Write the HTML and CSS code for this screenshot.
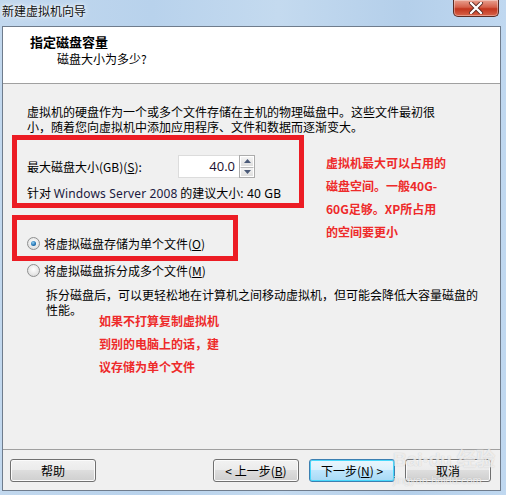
FILE: index.html
```html
<!DOCTYPE html>
<html lang="zh-CN">
<head>
<meta charset="utf-8">
<title>新建虚拟机向导</title>
<link rel="stylesheet" href="styles.css">
</head>
<body>
<div class="window">
  <div class="titlebar">
    <span class="title">新建虚拟机向导</span>
    <div class="close"><svg width="16" height="12" viewBox="0 0 16 12"><path d="M3 1 L13 11 M13 1 L3 11" stroke="#5a2a22" stroke-width="4" stroke-linecap="round"/><path d="M3 1 L13 11 M13 1 L3 11" stroke="#ffffff" stroke-width="2.4" stroke-linecap="round"/></svg></div>
  </div>
  <div class="panel">
    <div class="header">
      <div class="h-title">指定磁盘容量</div>
      <div class="h-sub">磁盘大小为多少?</div>
    </div>
    <div class="content">
      <p class="intro">虚拟机的硬盘作为一个或多个文件存储在主机的物理磁盘中。这些文件最初很<br>小，随着您向虚拟机中添加应用程序、文件和数据而逐渐变大。</p>
      <div class="size-row">
        <span class="label">最大磁盘大小(GB)(<u>S</u>):</span>
        <div class="spin">
          <div class="spin-input">40.0</div>
          <div class="spin-btns">
            <div class="sbtn"><svg width="7" height="4" viewBox="0 0 7 4"><path d="M0 4 L3.5 0 L7 4 Z" fill="#4a5a78"/></svg></div>
            <div class="sbtn"><svg width="7" height="4" viewBox="0 0 7 4"><path d="M0 0 L3.5 4 L7 0 Z" fill="#4a5a78"/></svg></div>
          </div>
        </div>
      </div>
      <div class="recommend">针对 <span class="latin">Windows Server 2008</span> 的建议大小<span class="latin">: 40 GB</span></div>
      <div class="radio-row r1"><span class="radio on"></span><span>将虚拟磁盘存储为单个文件(<u>O</u>)</span></div>
      <div class="radio-row r2"><span class="radio"></span><span>将虚拟磁盘拆分成多个文件(<u>M</u>)</span></div>
      <p class="desc">拆分磁盘后，可以更轻松地在计算机之间移动虚拟机，但可能会降低大容量磁盘的<br>性能。</p>

      <div class="mark box1"></div>
      <div class="mark box2"></div>
      <div class="note note-right"><div>虚拟机最大可以占用的</div><div>磁盘空间。一般40G-</div><div>60G足够。XP所占用</div><div>的空间要更小</div></div>
      <div class="note note-bottom"><div>如果不打算复制虚拟机</div><div>到别的电脑上的话，建</div><div>议存储为单个文件</div></div>
    </div>
    <div class="footer">
      <button class="btn">帮助</button>
      <div class="spacer"></div>
      <button class="btn">&lt; 上一步(<u>B</u>)</button>
      <button class="btn primary">下一步(<u>N</u>) &gt;</button>
      <button class="btn">取消</button>
      <div class="watermark">Bai<span class="paw">●</span>du 经验<br><span class="wm-url">jingyan.baidu.com</span></div>
    </div>
  </div>
</div>
</body>
</html>
```
FILE: styles.css
```css
* { box-sizing: border-box; }
html, body { margin: 0; padding: 0; }
body {
  width: 506px;
  height: 495px;
  overflow: hidden;
  font-family: "Noto Sans CJK SC", "Noto Sans", sans-serif;
  font-size: 12px;
  color: #000;
  background: #bcd7ef;
}
.window {
  width: 506px;
  height: 495px;
  display: flex;
  flex-direction: column;
  background: linear-gradient(90deg, #c2d8ee 0%, #b8d2ec 30%, #c4daef 55%, #b4cfea 80%, #c0d8f0 100%);
}
.titlebar {
  height: 26px;
  flex: none;
  display: flex;
  align-items: flex-start;
  justify-content: space-between;
  padding-left: 2px;
  padding-right: 7px;
}
.title {
  line-height: 22px;
  font-size: 12px;
  color: #111;
  text-shadow: 0 0 6px #fff, 0 0 3px #fff;
}
.close {
  width: 46px;
  height: 17px;
  border: 1px solid #5b2c24;
  border-top: none;
  border-radius: 0 0 5px 5px;
  background: linear-gradient(180deg, #e8a190 0%, #d5604a 45%, #c2351d 55%, #d8644a 100%);
  display: flex;
  align-items: center;
  justify-content: center;
  box-shadow: inset 0 0 0 1px rgba(255,255,255,0.35);
}
.panel {
  flex: none;
  margin-left: 2px;
  width: 499px;
  height: 465px;
  border: 1px solid #6f7c8c;
  background: #f0f0f0;
  display: flex;
  flex-direction: column;
}
.header {
  height: 57px;
  flex: none;
  background: #fff;
  border-bottom: 1px solid #a0a0a0;
  padding-left: 27px;
  padding-top: 6px;
}
.h-title {
  font-weight: bold;
  font-size: 13px;
  line-height: 17px;
}
.h-sub {
  padding-left: 27px;
  line-height: 17px;
}
.content {
  flex: 1;
  position: relative;
  padding-left: 24px;
  padding-top: 20px;
}
.intro {
  margin: 0;
  line-height: 15px;
}
.size-row {
  margin-top: 21px;
  height: 23px;
  display: flex;
  align-items: center;
}
.label { width: 151px; }
.spin { display: flex; height: 23px; }
.spin-input {
  width: 61px;
  height: 23px;
  background: #fff;
  border: 1px solid #dcdcdc;
  border-right: none;
  text-align: right;
  padding-right: 4px;
  font-family: "Open Sans", "Noto Sans", sans-serif;
  font-size: 13px;
  line-height: 21px;
  color: #1b1030;
}
.spin-btns {
  width: 16px;
  display: flex;
  flex-direction: column;
  border: 1px solid #acacac;
}
.sbtn {
  flex: 1;
  display: flex;
  align-items: center;
  justify-content: center;
  background: linear-gradient(180deg, #f4f4f4, #dedede);
  border: 1px solid #fff;
}
.sbtn + .sbtn { border-top: 1px solid #b8b8b8; }
.recommend {
  margin-top: 7px;
  line-height: 15px;
}
.latin { font-family: "Noto Sans", sans-serif; color: #1a1a40; letter-spacing: 0.15px; }
.recommend .latin:last-child { color: #000; }
.radio-row {
  display: flex;
  align-items: center;
  line-height: 15px;
  gap: 4px;
}
.r1 { margin-top: 35px; }
.r2 { margin-top: 12px; }
.radio {
  width: 13px;
  height: 13px;
  border-radius: 50%;
  border: 1px solid #8e8f8f;
  background: radial-gradient(circle at 50% 40%, #ffffff 0%, #e6e6e6 60%, #cfcfcf 100%);
  flex: none;
  position: relative;
}
.radio.on::after {
  content: "";
  position: absolute;
  left: 3px; top: 3px;
  width: 5px; height: 5px;
  border-radius: 50%;
  background: radial-gradient(circle at 40% 35%, #8fd0f5 0%, #1d6fb0 60%, #0f4b80 100%);
}
.desc {
  margin: 9px 0 0 19px;
  line-height: 15px;
}
.mark {
  position: absolute;
  border: 5px solid #ec1c24;
}
.box1 { left: 9px; top: 51px; width: 292px; height: 73px; }
.box2 { left: 9px; top: 131px; width: 226px; height: 46px; }
.note {
  position: absolute;
  color: #ee2a2a;
  font-weight: bold;
  font-size: 12px;
  line-height: 15px;
  display: flex;
  flex-direction: column;
  gap: 8px;
}
.note-right { left: 323px; top: 71px; }
.note-bottom { left: 96px; top: 229px; }
.footer {
  flex: none;
  height: 41px;
  border-top: 1px solid #a0a0a0;
  display: flex;
  align-items: flex-start;
  padding: 9px 9px 0 7px;
  gap: 10px;
  position: relative;
}
.spacer { flex: 1; }
.btn {
  width: 86px;
  height: 23px;
  border: 1px solid #707070;
  border-radius: 3px;
  background: linear-gradient(180deg, #f2f2f2 0%, #ebebeb 49%, #dddddd 50%, #cfcfcf 100%);
  box-shadow: inset 0 0 0 1px #fbfbfb;
  font-family: "Noto Sans CJK SC", "Noto Sans", sans-serif;
  font-size: 12px;
  color: #000;
  padding: 0;
  line-height: 19px;
}
.btn.primary {
  border-color: #3c7fb1;
  background: linear-gradient(180deg, #eaf6fd 0%, #d9f0fc 49%, #bee6fd 50%, #a7d9f5 100%);
  box-shadow: inset 0 0 0 1px #48d8fb;
}
.watermark {
  position: absolute;
  left: 390px;
  top: 1px;
  color: rgba(255,255,255,0.7);
  text-shadow: 0 0 1px rgba(130,130,130,0.45);
  font-family: "Liberation Sans", sans-serif;
  font-weight: bold;
  font-size: 19px;
  line-height: 18px;
  pointer-events: none;
}
.paw { font-size: 10px; vertical-align: top; }
.wm-url { font-size: 11px; font-weight: normal; line-height: 13px; }
```
